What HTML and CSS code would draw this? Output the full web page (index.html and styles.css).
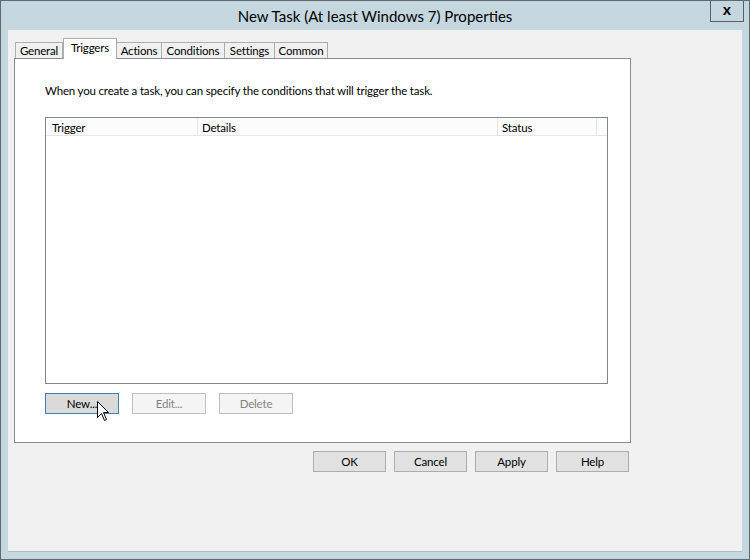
FILE: index.html
```html
<!DOCTYPE html>
<html>
<head>
<meta charset="utf-8">
<link rel="stylesheet" href="styles.css">
</head>
<body>
<div class="window">
  <div class="titlebar">
    <div class="tb-side"></div>
    <div class="title">New Task (At least Windows 7) Properties</div>
    <div class="tb-side tb-right"><div class="close">x</div></div>
  </div>
  <div class="client">
    <div class="dialog">
      <div class="tabs">
        <div class="tab tab-general">General</div>
        <div class="tab tab-triggers selected">Triggers</div>
        <div class="tab tab-actions">Actions</div>
        <div class="tab tab-conditions">Conditions</div>
        <div class="tab tab-settings">Settings</div>
        <div class="tab tab-common">Common</div>
      </div>
      <div class="panel">
        <p class="desc">When you create a task, you can specify the conditions that will trigger the task.</p>
        <div class="listbox">
          <div class="header">
            <div class="col col-trigger">Trigger</div>
            <div class="col col-details">Details</div>
            <div class="col col-status">Status</div>
          </div>
        </div>
        <div class="list-buttons">
          <div class="btn hover">New...
            <svg class="cursor" width="13" height="21" viewBox="0 0 13 21"><path d="M0.5 0.5 L0.5 16.5 L4.5 12.5 L7.5 19.5 L9.5 18.5 L6.5 11.5 L11.5 11.5 Z" fill="#fff" stroke="#000" stroke-width="1" stroke-linejoin="miter"/></svg>
          </div>
          <div class="btn disabled">Edit...</div>
          <div class="btn disabled">Delete</div>
        </div>
      </div>
      <div class="actions">
        <div class="btn">OK</div>
        <div class="btn">Cancel</div>
        <div class="btn">Apply</div>
        <div class="btn">Help</div>
      </div>
    </div>
  </div>
</div>
</body>
</html>
```

FILE: styles.css
```css
* { box-sizing: border-box; }
html, body { margin: 0; padding: 0; }
body {
  font-family: Lato, "Noto Sans", sans-serif;
  font-size: 11.5px;
  letter-spacing: -0.17px;
  color: #000;
  background: #fff;
}
.window {
  width: 750px;
  height: 560px;
  border: 1px solid #5f6a72;
  background: #c5d7de;
  display: flex;
  flex-direction: column;
}
.titlebar {
  height: 29px;
  flex: none;
  display: grid;
  grid-template-columns: 1fr auto 1fr;
  align-items: start;
}
.title {
  font-size: 15px;
  letter-spacing: 0;
  line-height: 30px;
  color: #000;
  white-space: nowrap;
}
.tb-right {
  display: flex;
  justify-content: flex-end;
  padding-right: 5px;
}
.close {
  width: 34px;
  height: 21px;
  border: 1px solid #5a6068;
  border-top: none;
  font-family: "Liberation Sans", Arial, sans-serif;
  font-weight: bold;
  font-size: 15px;
  letter-spacing: 0;
  line-height: 17px;
  text-align: center;
  color: #000;
}
.client {
  flex: 1;
  margin: 0 7px 7px 7px;
  background: #f0f0f0;
  border-bottom: 1px solid #b3bbbf;
  padding: 8px 0 0 6px;
}
.dialog {
  width: 617px;
}
.tabs {
  display: flex;
  align-items: flex-end;
  height: 20px;
  padding-left: 1px;
  position: relative;
  z-index: 1;
}
.tab {
  height: 16px;
  border: 1px solid #acacac;
  border-bottom: none;
  background: #f0f0f0;
  text-align: center;
  line-height: 15px;
  white-space: nowrap;
  margin-left: -1px;
}
.tab-general { width: 48px; margin-left: 0; }
.tab-triggers { width: 54px; }
.tab-actions { width: 46px; }
.tab-conditions { width: 64px; }
.tab-settings { width: 51px; }
.tab-common { width: 54px; }
.tab.selected {
  height: 21px;
  margin-bottom: -1px;
  margin-left: 0;
  background: #fff;
  line-height: 18px;
  position: relative;
  z-index: 2;
}
.panel {
  height: 385px;
  border: 1px solid #898c95;
  background: #fff;
  padding: 24px 0 0 30px;
}
.desc {
  margin: 0;
  line-height: 16px;
  white-space: nowrap;
}
.listbox {
  margin-top: 18px;
  width: 563px;
  height: 267px;
  border: 1px solid #828790;
  background: #fff;
}
.header {
  display: flex;
  height: 18px;
  border-bottom: 1px solid #e5e5e5;
  background: #fcfcfc;
}
.col {
  border-right: 1px solid #e5e5e5;
  line-height: 19px;
  padding-left: 6px;
}
.col-trigger { width: 152px; }
.col-details { width: 300px; padding-left: 4px; }
.col-status { width: 99px; padding-left: 4px; }
.list-buttons {
  display: flex;
  gap: 13px;
  margin-top: 9px;
}
.btn {
  width: 74px;
  height: 21px;
  border: 1px solid #adadad;
  background: #e1e1e1;
  text-align: center;
  line-height: 19px;
  color: #000;
}
.btn.hover {
  border-color: #3c7fb1;
  background: #dadada;
  position: relative;
}
.btn.disabled {
  border-color: #bfbfbf;
  background: #f4f4f4;
  color: #838383;
}
.cursor {
  position: absolute;
  left: 51px;
  top: 7px;
}
.actions {
  display: flex;
  justify-content: flex-end;
  gap: 8px;
  margin-top: 8px;
  padding-right: 2px;
}
.actions .btn { width: 73px; }
```
